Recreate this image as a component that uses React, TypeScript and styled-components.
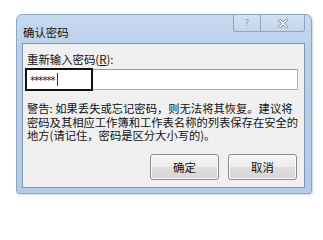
import React from "react";
import styled, { createGlobalStyle } from "styled-components";

const Global = createGlobalStyle`
  html, body { margin: 0; padding: 0; background: #ffffff; }
  body { font-family: "Noto Sans CJK SC", "Noto Sans", sans-serif; }
`;

const Page = styled.div`
  padding: 14px 0 0 16px;
  width: 323px;
  height: 206px;
  box-sizing: border-box;
`;

const Window = styled.div`
  width: 296px;
  box-sizing: border-box;
  border: 1px solid #8ea6c6;
  border-radius: 6px 6px 3px 3px;
  background: linear-gradient(#c6d9ef, #b9cfea 40px, #b4cbe7);
  padding: 0 6px 5px 5px;
  box-shadow: 1px 1px 2px rgba(120, 140, 170, 0.35);
`;

const TitleBar = styled.div`
  height: 28px;
  display: flex;
  align-items: flex-start;
  justify-content: space-between;
`;

const Title = styled.div`
  font-size: 11.4px;
  line-height: 14px;
  color: #111;
  padding-top: 10px;
  padding-left: 1px;
`;

const Caption = styled.div`
  display: flex;
  border: 1px solid #8fa4bf;
  border-top: none;
  border-radius: 0 0 3px 3px;
  height: 16px;
  background: linear-gradient(#d3e1f1, #c3d5ec);
`;

const CapButton = styled.div<{ $w: number; $last?: boolean }>`
  width: ${(p) => p.$w}px;
  height: 16px;
  display: flex;
  align-items: center;
  justify-content: center;
  border-right: ${(p) => (p.$last ? "none" : "1px solid #8fa4bf")};
  font-family: "DejaVu Sans", sans-serif;
  font-size: 9px;
  color: #8b9bb0;
`;

const Client = styled.div`
  border: 1px solid #8396b1;
  background: #f0f0f0;
  height: 145px;
  box-sizing: border-box;
  padding: 8px 6px 0 2px;
  display: flex;
  flex-direction: column;
`;

const Label = styled.div`
  font-size: 11.4px;
  line-height: 14px;
  color: #111;
  padding-left: 2px;
  u { text-decoration: underline; text-underline-offset: 1px; }
`;

const FieldWrap = styled.div`
  position: relative;
  margin-top: 3px;
  width: 273px;
`;

const Field = styled.div`
  height: 21px;
  box-sizing: border-box;
  border: 1px solid #abadb3;
  border-top-color: #9a9ca3;
  background: #ffffff;
  display: flex;
  align-items: center;
  padding-left: 4px;
  font-family: "DejaVu Sans", sans-serif;
  font-size: 10.5px;
  letter-spacing: -1.2px;
  color: #222;
`;

const Caret = styled.span`
  display: inline-block;
  width: 1px;
  height: 13px;
  background: #333;
  margin-left: 3px;
`;

const Highlight = styled.div`
  position: absolute;
  left: 0;
  top: -1px;
  width: 68px;
  height: 23px;
  box-sizing: border-box;
  border: 2px solid #111;
  pointer-events: none;
`;

const Warning = styled.div`
  margin-top: 12px;
  padding-left: 2px;
  font-size: 11.3px;
  line-height: 13.7px;
  color: #111;
  white-space: nowrap;
`;

const Buttons = styled.div`
  margin-top: 11px;
  display: flex;
  justify-content: flex-end;
  gap: 9px;
  padding-right: 1px;
`;

const Button = styled.div`
  width: 69px;
  height: 26px;
  box-sizing: border-box;
  border: 1px solid #8a8a8a;
  border-radius: 3px;
  background: linear-gradient(#f4f4f4, #ececec 50%, #dedede 51%, #d6d6d6);
  box-shadow: inset 0 0 0 1px #fbfbfb;
  display: flex;
  align-items: center;
  justify-content: center;
  font-size: 11.4px;
  color: #111;
`;

const CloseGlyph = () => (
  <svg width="10" height="9" viewBox="0 0 10 9">
    <path d="M1.5 1 L8.5 8 M8.5 1 L1.5 8" stroke="#6f7f95" strokeWidth="2.6" strokeLinecap="round" />
    <path d="M1.5 1 L8.5 8 M8.5 1 L1.5 8" stroke="#ffffff" strokeWidth="1.3" strokeLinecap="round" />
  </svg>
);

export default function App() {
  return (
    <>
      <Global />
      <Page>
        <Window>
          <TitleBar>
            <Title>确认密码</Title>
            <Caption>
              <CapButton $w={26}>?</CapButton>
              <CapButton $w={43} $last>
                <CloseGlyph />
              </CapButton>
            </Caption>
          </TitleBar>
          <Client>
            <Label>
              重新输入密码(<u>R</u>):
            </Label>
            <FieldWrap>
              <Field>
                ******
                <Caret />
              </Field>
              <Highlight />
            </FieldWrap>
            <Warning>
              警告: 如果丢失或忘记密码，则无法将其恢复。建议将
              <br />
              密码及其相应工作簿和工作表名称的列表保存在安全的
              <br />
              地方(请记住，密码是区分大小写的)。
            </Warning>
            <Buttons>
              <Button>确定</Button>
              <Button>取消</Button>
            </Buttons>
          </Client>
        </Window>
      </Page>
    </>
  );
}
